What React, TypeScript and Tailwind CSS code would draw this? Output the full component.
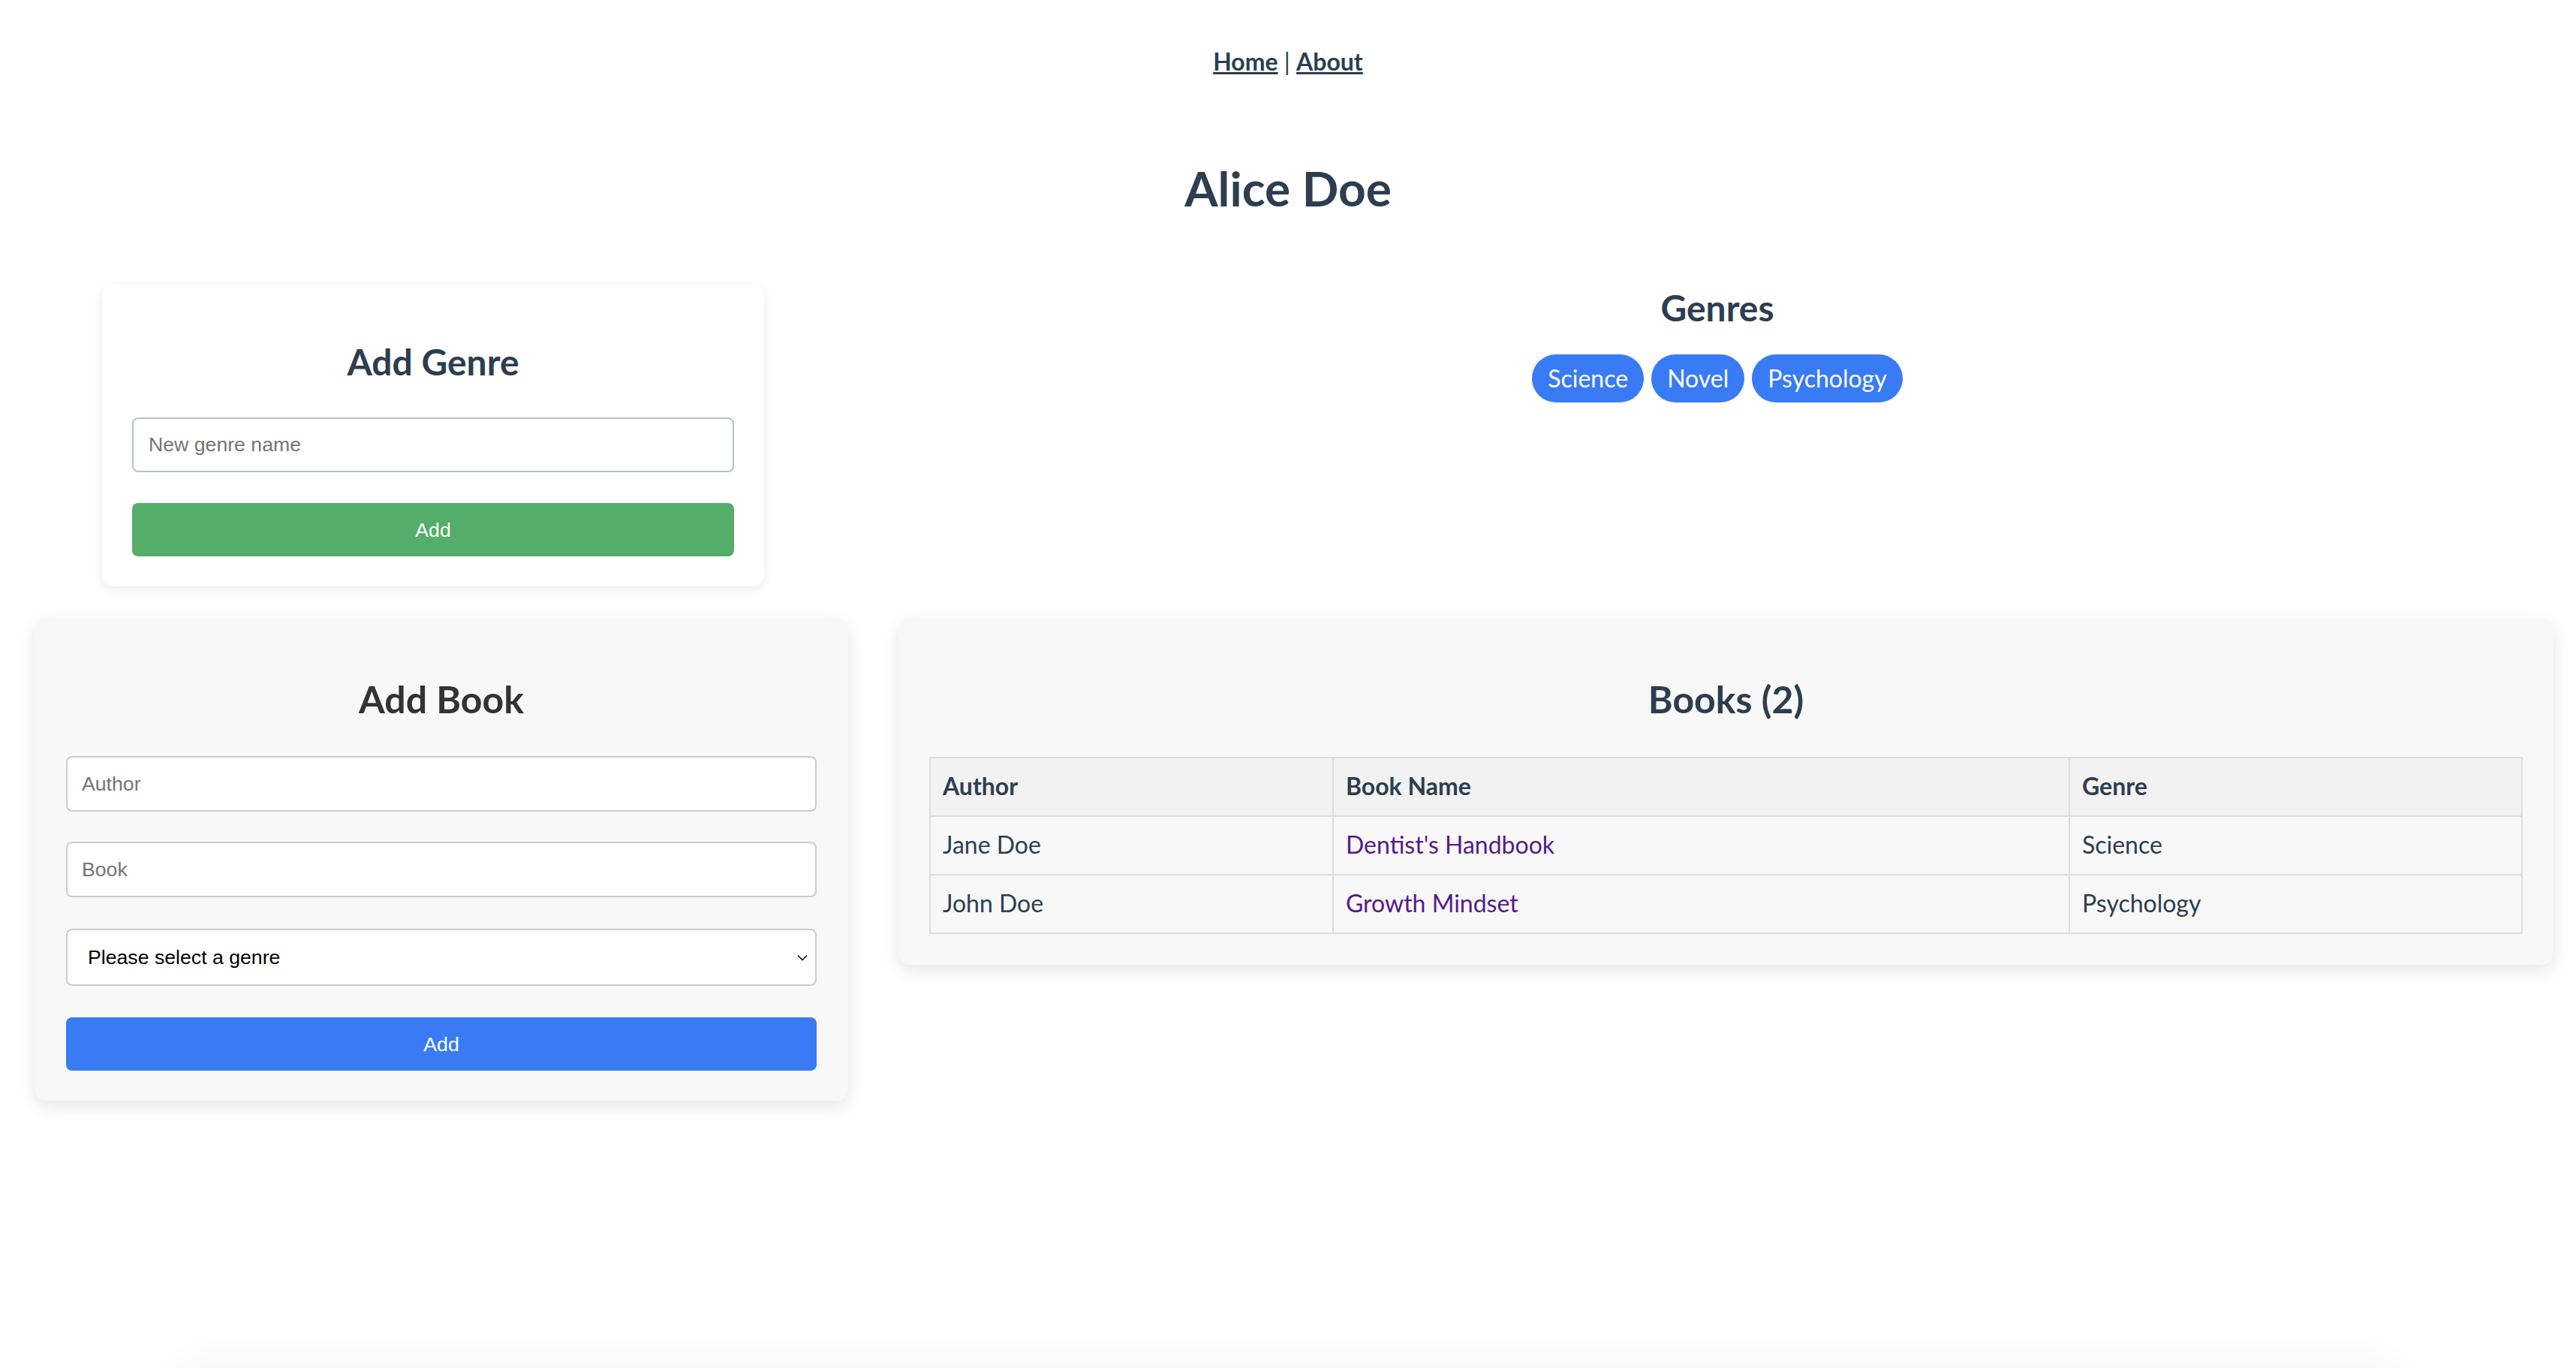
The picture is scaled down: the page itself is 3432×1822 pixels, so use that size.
import React from "react";

const genres = ["Science", "Novel", "Psychology"];

const books = [
  { author: "Jane Doe", name: "Dentist's Handbook", genre: "Science" },
  { author: "John Doe", name: "Growth Mindset", genre: "Psychology" },
];

function AddGenreCard() {
  return (
    <div className="ml-[136px] w-[882px] rounded-[15px] bg-white px-[40px] py-[40px] shadow-[0_4px_14px_rgba(0,0,0,0.08)]">
      <h2 className="mt-[30px] mb-[41px] text-center text-[48px] font-bold leading-[66px]">
        Add Genre
      </h2>
      <input
        placeholder="New genre name"
        className="block h-[73px] w-full rounded-[8px] border-2 border-[#b9c0c8] bg-white px-[20px] font-['Liberation_Sans',Arial,sans-serif] text-[26.67px] text-black placeholder:text-[#757575] outline-none"
      />
      <button className="mt-[41px] block h-[71px] w-full rounded-[8px] bg-[#55ad6a] font-['Liberation_Sans',Arial,sans-serif] text-[26.67px] text-white">
        Add
      </button>
    </div>
  );
}

function GenreList() {
  return (
    <div className="flex flex-1 flex-col items-center">
      <h2 className="mt-[-2px] text-center text-[48px] font-bold leading-[66px]">Genres</h2>
      <div className="mt-[29px] flex gap-[10px]">
        {genres.map((g) => (
          <span
            key={g}
            className="flex h-[64px] items-center rounded-full bg-[#387bf5] px-[21px] text-[32px] text-white"
          >
            {g}
          </span>
        ))}
      </div>
    </div>
  );
}

function AddBookCard() {
  const field =
    "block h-[74px] w-full rounded-[8px] border-2 border-[#cccccc] bg-white px-[19px] font-['Liberation_Sans',Arial,sans-serif] text-[26.67px] text-black placeholder:text-[#757575] outline-none";
  return (
    <div className="ml-[46px] w-[1084px] shrink-0 rounded-[15px] bg-[#f8f8f8] px-[42px] pt-[40px] pb-[40px] shadow-[0_8px_22px_rgba(0,0,0,0.1)]">
      <h2 className="mt-[32px] mb-[40px] text-center text-[50px] font-bold leading-[72px] text-[#333333]">
        Add Book
      </h2>
      <input placeholder="Author" className={field} />
      <input placeholder="Book" className={`${field} mt-[40px]`} />
      <div className="relative mt-[42px]">
        <select className="block h-[76px] w-full appearance-none rounded-[8px] border-2 border-[#cccccc] bg-white pl-[27px] font-['Liberation_Sans',Arial,sans-serif] text-[26.67px] text-black outline-none">
          <option>Please select a genre</option>
          {genres.map((g) => (
            <option key={g}>{g}</option>
          ))}
        </select>
        <svg
          className="pointer-events-none absolute right-[12px] top-[34px]"
          width="14"
          height="9"
          viewBox="0 0 14 9"
          fill="none"
        >
          <path d="M1 1.5 L7 7.5 L13 1.5" stroke="#111" strokeWidth="1.6" />
        </svg>
      </div>
      <button className="mt-[42px] block h-[71px] w-full rounded-[8px] bg-[#387bf5] font-['Liberation_Sans',Arial,sans-serif] text-[26.67px] text-white">
        Add
      </button>
    </div>
  );
}

function BooksCard() {
  const cell = "border-2 border-[#dddddd] px-[16px] pt-[15px] pb-[17px] leading-[44px]";
  return (
    <div className="ml-[67px] w-[2205px] shrink-0 rounded-[15px] bg-[#f8f8f8] px-[41px] pt-[40px] pb-[41px] shadow-[0_8px_22px_rgba(0,0,0,0.1)]">
      <h2 className="mt-[32px] mb-[41px] text-center text-[50px] font-bold leading-[72px]">
        Books ({books.length})
      </h2>
      <table className="w-full border-collapse border-2 border-[#dddddd] text-left">
        <thead>
          <tr className="bg-[#f2f2f2]">
            <th className={`w-[537px] font-bold ${cell}`}>Author</th>
            <th className={`w-[981px] font-bold ${cell}`}>Book Name</th>
            <th className={`font-bold ${cell}`}>Genre</th>
          </tr>
        </thead>
        <tbody>
          {books.map((b) => (
            <tr key={b.name}>
              <td className={cell}>{b.author}</td>
              <td className={cell}>
                <a href="#" className="text-[#551a8b]">
                  {b.name}
                </a>
              </td>
              <td className={cell}>{b.genre}</td>
            </tr>
          ))}
        </tbody>
      </table>
    </div>
  );
}

export default function App() {
  return (
    <div className="h-[1822px] overflow-hidden bg-white font-['Lato','Noto_Sans',sans-serif] text-[32px] leading-[44px] text-[#2c3e50]">
      <nav className="py-[60px] text-center">
        <a href="#" className="font-bold underline">
          Home
        </a>{" "}
        |{" "}
        <a href="#" className="font-bold underline">
          About
        </a>
      </nav>
      <h1 className="mt-[43px] mb-[85px] text-center text-[64px] font-bold leading-[87px]">Alice Doe</h1>

      <div className="flex items-start">
        <div className="w-[1144px] shrink-0">
          <AddGenreCard />
        </div>
        <GenreList />
      </div>

      <div className="mt-[42px] flex items-start">
        <AddBookCard />
        <BooksCard />
      </div>

      <div className="mx-[240px] mt-[365px] h-[400px] rounded-[15px] bg-white shadow-[0_0_60px_rgba(0,0,0,0.08)]" />
    </div>
  );
}
